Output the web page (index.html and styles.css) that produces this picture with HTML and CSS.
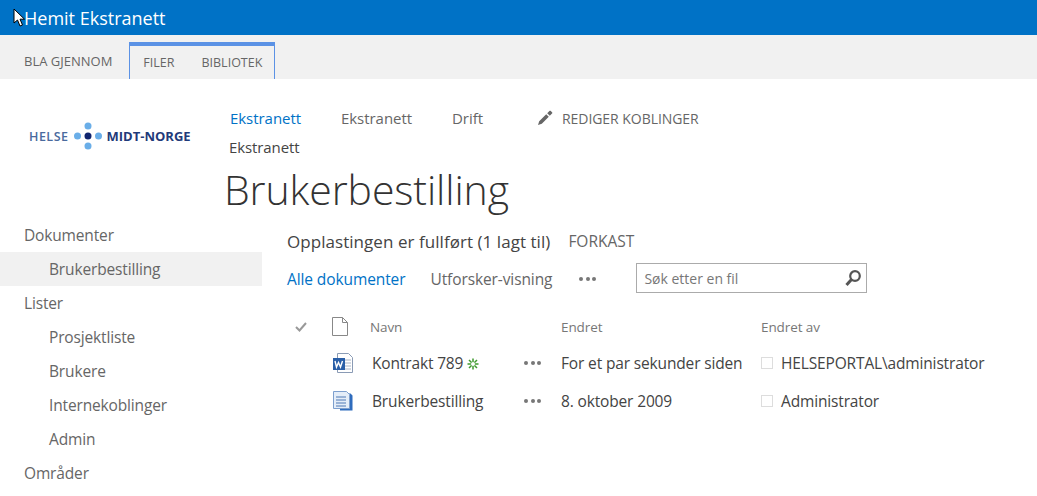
FILE: index.html
```html
<!DOCTYPE html>
<html lang="en">
<head>
    <meta charset="UTF-8">
    <meta name="viewport" content="width=device-width, initial-scale=1.0">
    <title>Brukerbestilling</title>
    <link rel="stylesheet" href="styles.css">
</head>
<body>
    <header class="topbar">
        <span>Hemit Ekstranett</span>
        <svg class="cursor" width="13" height="19" viewBox="0 0 13 19"><path d="M1 1v14l3.500-3 2.500 6 2.500-1-2.500-5.800h4.500z" fill="#fff" stroke="#000"/></svg>
    </header>
    <div class="ribbon">
        <a class="ribbon-tab">BLA GJENNOM</a>
        <div class="ribbon-group">
            <a class="ribbon-tab">FILER</a>
            <a class="ribbon-tab">BIBLIOTEK</a>
        </div>
    </div>
    <div class="head">
        <div class="logo">
            <span class="logo-light">HELSE</span>
            <svg width="30" height="28" viewBox="0 0 30 28">
                <circle cx="15" cy="4" r="3.500" fill="#6aaee8"/>
                <circle cx="15" cy="24" r="3.500" fill="#6aaee8"/>
                <circle cx="4.500" cy="14" r="3.500" fill="#6aaee8"/>
                <circle cx="25.500" cy="14" r="3.500" fill="#6aaee8"/>
                <circle cx="15" cy="14" r="3.500" fill="#10246e"/>
            </svg>
            <span class="logo-dark">MIDT-NORGE</span>
        </div>
        <div class="head-main">
            <nav class="topnav">
                <a class="active">Ekstranett</a>
                <a>Ekstranett</a>
                <a>Drift</a>
                <a class="edit-links">
                    <svg width="16" height="16" viewBox="0 0 16 16"><path d="M1 15l1.200-3.800 7-7 2.600 2.600-7 7zM10.200 3.200l2.200-2.200c.5-.5 1-.4 1.400 0l1.200 1.200c.4.400.5.900 0 1.400l-2.200 2.200z" fill="#666"/></svg>
                    REDIGER KOBLINGER
                </a>
            </nav>
            <div class="crumb">Ekstranett</div>
            <h1>Brukerbestilling</h1>
        </div>
    </div>
    <div class="page">
        <ul class="sidenav">
            <li>Dokumenter</li>
            <li class="sub selected">Brukerbestilling</li>
            <li>Lister</li>
            <li class="sub">Prosjektliste</li>
            <li class="sub">Brukere</li>
            <li class="sub">Internekoblinger</li>
            <li class="sub">Admin</li>
            <li>Områder</li>
        </ul>
        <main class="content">
            <div class="notice">
                <span class="notice-text">Opplastingen er fullført (1 lagt til)</span>
                <span class="notice-action">FORKAST</span>
            </div>
            <div class="views">
                <a class="view active">Alle dokumenter</a>
                <a class="view">Utforsker-visning</a>
                <span class="dots views-dots"><i></i><i></i><i></i></span>
                <div class="search">
                    <span>Søk etter en fil</span>
                    <svg width="18" height="18" viewBox="0 0 18 18"><circle cx="11" cy="7" r="4.800" fill="none" stroke="#555" stroke-width="2.200"/><path d="M7.500 10.500l-5 5.500" stroke="#555" stroke-width="3"/></svg>
                </div>
            </div>
            <div class="doclist">
                <div class="row row-head">
                    <svg width="12" height="10" viewBox="0 0 12 10"><path d="M1 5l3.500 3.500L11 1" fill="none" stroke="#999" stroke-width="2"/></svg>
                    <svg width="16" height="19" viewBox="0 0 16 19"><path d="M.5.500h10l5 5v13H.500zM10.500.500v5h5" fill="none" stroke="#888"/></svg>
                    <span>Navn</span>
                    <span></span>
                    <span>Endret</span>
                    <span>Endret av</span>
                </div>
                <div class="row">
                    <span></span>
                    <svg width="22" height="20" viewBox="0 0 22 20">
                        <path d="M5.500.500h11l4 4v15h-15z" fill="#fff" stroke="#8a9bb5"/>
                        <path d="M13 7h6M13 10h6M13 13h6M13 16h6" stroke="#a9b4c6"/>
                        <rect x="1" y="5" width="12" height="12" fill="#2a5fa8"/>
                        <path d="M3 8l1.500 6 2-4.500 2 4.500L10.500 8" fill="none" stroke="#fff" stroke-width="1.400"/>
                    </svg>
                    <span class="name">Kontrakt 789
                        <svg class="new" width="12" height="12" viewBox="0 0 12 12"><path d="M6 .5v11M.5 6h11M2 2l8 8M10 2l-8 8" stroke="#3f9a2e" stroke-width="1.500"/><circle cx="6" cy="6" r="2" fill="#fff"/></svg>
                    </span>
                    <span class="dots"><i></i><i></i><i></i></span>
                    <span class="cell">For et par sekunder siden</span>
                    <span class="cell person"><b class="presence"></b>HELSEPORTAL\administrator</span>
                </div>
                <div class="row">
                    <span></span>
                    <svg width="22" height="20" viewBox="0 0 22 20">
                        <path d="M16 2.500h2.500l2 2v15H8v-2h8z" fill="#2f6cbd"/>
                        <path d="M1.500.500h13l3 3v14h-16z" fill="#e4edf8" stroke="#7d9fce"/>
                        <path d="M4 6h10M4 9h10M4 12h10M4 15h10" stroke="#4f79b4"/>
                    </svg>
                    <span class="name">Brukerbestilling</span>
                    <span class="dots"><i></i><i></i><i></i></span>
                    <span class="cell">8. oktober 2009</span>
                    <span class="cell person"><b class="presence"></b>Administrator</span>
                </div>
            </div>
        </main>
    </div>
</body>
</html>
```

FILE: styles.css
```css
html, body {
    height: 100%;
}
body {
    font-family: "Open Sans", "Noto Sans", sans-serif;
    color: #444;
    background-color: #fff;
    margin: 0;
    padding: 0;
    overflow: hidden;
}
.topbar {
    position: relative;
    background-color: #0072c6;
    color: white;
    height: 35px;
    line-height: 37px;
    padding-left: 24px;
    font-size: 18px;
}
.cursor {
    position: absolute;
    left: 13px;
    top: 8px;
}
.ribbon {
    display: flex;
    height: 44px;
    background-color: #f1f1f1;
    font-size: 13px;
    color: #666;
}
.ribbon-tab {
    line-height: 38px;
    margin-top: 7px;
}
.ribbon > .ribbon-tab {
    padding: 0 17px 0 24px;
}
.ribbon-group {
    display: flex;
    gap: 27px;
    padding: 0 12px 0 13px;
    margin-top: 7px;
    border: 1px solid #5b92e5;
    border-top-width: 4px;
    border-bottom: none;
    font-size: 12.500px;
}
.ribbon-group .ribbon-tab {
    margin-top: 0;
    line-height: 33px;
}
.head {
    display: flex;
}
.logo {
    width: 229px;
    flex: none;
    box-sizing: border-box;
    display: flex;
    align-items: center;
    padding: 14px 0 0 29px;
    height: 100px;
    font-size: 12.500px;
    font-weight: 700;
    color: #1f3a7a;
}
.logo svg {
    margin: 0 4px;
}
.logo-light {
    color: #4a6a9e;
    font-weight: 600;
    letter-spacing: 0.5px;
}
.logo-dark {
    white-space: nowrap;
    font-size: 13px;
}
.topnav {
    display: flex;
    align-items: center;
    height: 24px;
    margin-top: 27px;
    padding-left: 1px;
    font-size: 15px;
    letter-spacing: -0.05px;
    color: #666;
}
.topnav a {
    margin-right: 40px;
}
.topnav a.active {
    color: #0072c6;
}
.topnav .edit-links {
    display: flex;
    align-items: center;
    gap: 9px;
    margin-left: 14px;
    font-size: 14px;
    letter-spacing: -0.05px;
}
.crumb {
    font-size: 15px;
    letter-spacing: -0.1px;
    line-height: 20px;
    margin-top: 7px;
    color: #444;
}
h1 {
    font-size: 41px;
    font-weight: 300;
    letter-spacing: -0.1px;
    line-height: 56px;
    margin: 4px 0 0 -5px;
    color: #333;
}
.page {
    display: flex;
}
.sidenav {
    list-style: none;
    margin: 1px 0 0;
    padding: 0;
    width: 262px;
    flex: none;
    font-size: 15.500px;
    letter-spacing: -0.15px;
    color: #666;
}
.sidenav li {
    height: 34px;
    line-height: 35px;
    padding-left: 24px;
}
.sidenav .sub {
    padding-left: 49px;
}
.sidenav .selected {
    background-color: #f1f1f1;
}
.content {
    flex: 1;
    padding-left: 25px;
}
.notice {
    display: flex;
    align-items: center;
    height: 24px;
    margin-top: 12px;
}
.notice-text {
    font-size: 17px;
    letter-spacing: 0.05px;
    color: #444;
}
.notice-action {
    margin-left: 18px;
    font-size: 15.500px;
    color: #666;
}
.views {
    display: flex;
    align-items: center;
    height: 30px;
    margin-top: 11px;
    font-size: 15.500px;
    letter-spacing: -0.1px;
    color: #666;
}
.view {
    margin-right: 25px;
}
.view.active {
    color: #0072c6;
}
.dots {
    display: inline-flex;
    gap: 2.500px;
}
.dots i {
    width: 4px;
    height: 4px;
    border-radius: 50%;
    background-color: #777;
}
.views-dots {
    margin-left: 2px;
    margin-right: 40px;
}
.search {
    display: flex;
    align-items: center;
    justify-content: space-between;
    box-sizing: border-box;
    width: 231px;
    height: 30px;
    margin-top: -2px;
    padding: 0 4px 0 7px;
    border: 1px solid #ababab;
    font-size: 14px;
    letter-spacing: 0;
    color: #777;
}
.doclist {
    margin-top: 15px;
}
.row {
    display: grid;
    grid-template-columns: 46px 37px 154px 37px 200px 1fr;
    align-items: center;
    height: 38px;
    font-size: 15.500px;
    letter-spacing: -0.15px;
    color: #444;
}
.row-head {
    height: 35px;
    font-size: 13.500px;
    letter-spacing: -0.1px;
    color: #777;
}
.row-head svg:first-child {
    margin-left: 8px;
}
.row svg:nth-child(2) {
    margin-left: -1px;
}
.name {
    display: flex;
    align-items: center;
    gap: 4px;
    padding-left: 2px;
}
.new {
    margin-top: 2px;
}
.person {
    display: flex;
    align-items: center;
}
.presence {
    box-sizing: border-box;
    width: 12px;
    height: 12px;
    margin-right: 8px;
    border: 1px solid #ddd;
}
```
